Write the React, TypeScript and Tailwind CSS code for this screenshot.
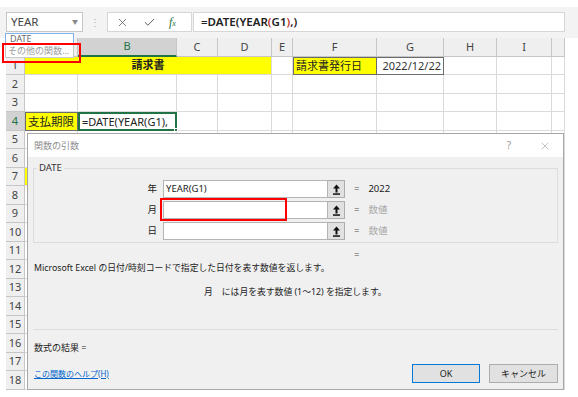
import { Check, X } from "lucide-react";

const cols = [
  { key: "A", w: "w-[53px]" },
  { key: "B", w: "w-[99px]" },
  { key: "C", w: "w-[41px]" },
  { key: "D", w: "w-[54px]" },
  { key: "E", w: "w-[21px]" },
  { key: "F", w: "w-[84px]" },
  { key: "G", w: "w-[67px]" },
  { key: "H", w: "w-[53px]" },
  { key: "I", w: "w-[55px]" },
  { key: "J", w: "w-[13px]" },
];

const rows = Array.from({ length: 18 }, (_, i) => i + 1);

function PickIcon() {
  return (
    <svg width="9" height="11" viewBox="0 0 9 11">
      <polygon points="4.5,0.5 8,4.5 1,4.5" fill="#111" />
      <rect x="3.5" y="4" width="2" height="4.5" fill="#111" />
      <rect x="1" y="9.3" width="7" height="1.5" fill="#111" />
    </svg>
  );
}

function Cell({ row, col, w }: { row: number; col: string; w: string }) {
  const grid = `${w} h-full shrink-0 border-r border-b border-[#dadada]`;
  if (row === 4 && col === "A")
    return <div className={`${w} h-full shrink-0 border border-[#6b6b6b] bg-[#ffff00] pl-[2px] text-[11.5px] leading-[17px]`}>支払期限</div>;
  if (row === 4 && col === "B")
    return (
      <div className={`${w} relative h-full shrink-0 border-2 border-[#217346] pl-[2px] text-[11px] leading-[15px]`}>
        =DATE(YEAR(G1),
        <span className="absolute -right-[3px] -bottom-[3px] h-[4px] w-[4px] border border-white bg-[#217346]" />
      </div>
    );
  if (row === 7 && col === "A") return <div className={`${grid} bg-[#ffff00]`} />;
  if (row === 1 && col === "F")
    return <div className={`${w} h-full shrink-0 border border-[#6b6b6b] bg-[#ffff00] pl-[2px] text-[11px] leading-[16px]`}>請求書発行日</div>;
  if (row === 1 && col === "G")
    return <div className={`${w} h-full shrink-0 border border-l-0 border-[#6b6b6b] pr-[2px] text-right text-[11px] leading-[16px] text-[#333]`}>2022/12/22</div>;
  return <div className={grid} />;
}

export default function App() {
  return (
    <div className="relative h-[397px] w-[578px] overflow-hidden bg-white font-['Noto_Sans','Noto_Sans_CJK_JP',sans-serif] text-[#222]">
      {/* formula bar */}
      <div className="mt-[7px] flex h-[31px] items-start bg-[#f3f3f3] pl-[6px] pt-[5px]">
        <div className="flex h-[20px] w-[77px] items-center justify-between border border-[#c6c6c6] bg-white pl-[4px] pr-[4px] text-[11.5px] text-[#444]">
          YEAR<span className="text-[6px] text-[#888]">▼</span>
        </div>
        <div className="flex h-[20px] w-[24px] items-center justify-center text-[10px] text-[#b0b0b0]">⋮</div>
        <div className="flex h-[20px] w-[85px] items-center border border-[#d6d6d6] bg-white">
          <X size={13} strokeWidth={1.4} className="ml-[8px] text-[#555]" />
          <Check size={13} strokeWidth={1.8} className="ml-[14px] text-[#555]" />
          <span className="ml-[13px] font-['Liberation_Serif',serif] text-[12px] italic text-[#217346]">
            f<span className="text-[8px]">x</span>
          </span>
        </div>
        <div className="ml-px flex h-[20px] w-[372px] items-center border border-[#d6d6d6] bg-white pl-[7px] text-[11.5px] font-semibold text-[#222]">
          =DATE(YEAR<span className="text-[#c0392b]">(</span>G1<span className="text-[#c0392b]">)</span>,)
        </div>
      </div>

      {/* column headers */}
      <div className="flex h-[19px] pl-[6px]">
        <div className="h-full w-[19px] shrink-0 border-r border-b border-[#c6c6c6] bg-[#efefef]" />
        {cols.map((c) => (
          <div
            key={c.key}
            className={`${c.w} flex h-full shrink-0 items-center justify-center text-[11px] ${
              c.key === "B"
                ? "border-r border-b-2 border-r-[#c6c6c6] border-b-[#217346] bg-[#d2d2d2] text-[#217346]"
                : "border-r border-b border-[#c6c6c6] bg-[#efefef] text-[#444]"
            }`}
          >
            {c.key === "J" || c.key === "A" ? "" : c.key}
          </div>
        ))}
      </div>

      {/* rows */}
      {rows.map((r) => (
        <div key={r} className={`flex pl-[6px] ${r % 2 === 1 ? "h-[18px]" : "h-[19px]"}`}>
          <div
            className={`flex h-full w-[19px] shrink-0 items-center justify-center border-r border-b border-[#c6c6c6] text-[11px] ${
              r === 4 ? "bg-[#d2d2d2] text-[#217346]" : "bg-[#efefef] text-[#444]"
            }`}
          >
            {r}
          </div>
          {r === 1 ? (
            <>
              <div className="flex h-full w-[247px] shrink-0 items-center justify-center border-r border-b border-[#dadada] bg-[#ffff00] text-[11px] font-bold">
                請求書
              </div>
              {cols.slice(4).map((c) => (
                <Cell key={c.key} row={r} col={c.key} w={c.w} />
              ))}
            </>
          ) : (
            cols.map((c) => <Cell key={c.key} row={r} col={c.key} w={c.w} />)
          )}
        </div>
      ))}

      {/* name box dropdown */}
      <div className="absolute left-[5px] top-[33px] w-[69px] bg-white text-[9px]">
        <div className="h-[11px] border border-[#7eb4ea] pl-[4px] leading-[9px] text-[#6a6a6a]">DATE</div>
        <div className="h-[14px] border border-t-0 border-[#c8c8c8] pl-[2px] leading-[13px] text-[#9a9a9a]">その他の関数...</div>
      </div>
      <div className="absolute left-[2px] top-[43px] h-[20px] w-[79px] border-2 border-[#ff0000]" />

      {/* function arguments dialog */}
      <div className="absolute left-[27px] top-[133px] flex h-[257px] w-[537px] flex-col border border-[#a8a8a8] bg-[#f0f0f0] text-[9px] text-[#222]">
        <div className="flex h-[23px] shrink-0 items-center bg-white pl-[6px]">
          <span className="text-[9px] text-[#8c8c8c]">関数の引数</span>
          <span className="ml-auto w-[12px] text-center text-[10px] text-[#999]">?</span>
          <X size={12} strokeWidth={1} className="ml-[24px] mr-[12px] text-[#888]" />
        </div>

        <fieldset className="mx-[5px] mt-[5px] h-[81px] border border-[#dcdcdc]">
          <legend className="ml-[3px] px-[2px] text-[9.5px] leading-[12px] text-[#333]">DATE</legend>
          <div className="mt-[6px] flex flex-col gap-[3px]">
            {[
              { label: "年", value: "YEAR(G1)", result: "2022" },
              { label: "月", value: "", result: "数値" },
              { label: "日", value: "", result: "数値" },
            ].map((a) => (
              <div key={a.label} className="flex h-[18px] items-center">
                <span className="w-[123px] text-right text-[9.5px]">{a.label}</span>
                <div className="ml-[6px] h-[18px] w-[165px] border border-[#b4b4b4] bg-white pl-[2px] text-[9.5px] leading-[16px]">{a.value}</div>
                <div className="flex h-[18px] w-[17px] items-center justify-center border border-l-0 border-[#adadad] bg-[#e1e1e1]">
                  <PickIcon />
                </div>
                <span className="ml-[9px] text-[9.5px] text-[#555]">=</span>
                <span className={`ml-[9px] text-[9.5px] ${a.result === "2022" ? "text-[#222]" : "text-[#a8a8a8]"}`}>{a.result}</span>
              </div>
            ))}
          </div>
        </fieldset>

        <div className="mt-[6px] h-[12px] pl-[326px] text-[9.5px] leading-[12px] text-[#555]">=</div>
        <div className="mt-[1px] h-[12px] pl-[6px] text-[8.8px] leading-[12px]">Microsoft Excel の日付/時刻コードで指定した日付を表す数値を返します。</div>
        <div className="mt-[12px] h-[12px] pl-[176px] text-[8.8px] leading-[12px]">
          月<span className="ml-[9px]">には月を表す数値 (1～12) を指定します。</span>
        </div>
        <div className="mx-[5px] mt-[31px] h-px bg-[#dcdcdc]" />
        <div className="mt-[12px] h-[12px] pl-[6px] leading-[12px]">数式の結果 =</div>
        <div className="mt-[10px] flex h-[19px] items-center pl-[6px] pr-[5px]">
          <a className="text-[8px] text-[#0066cc] underline">この関数のヘルプ(H)</a>
          <button type="button" className="ml-auto h-[19px] w-[68px] border border-[#0078d7] bg-[#e1e1e1] text-[9px]">OK</button>
          <button type="button" className="ml-[9px] h-[19px] w-[69px] border border-[#adadad] bg-[#e1e1e1] text-[9px]">キャンセル</button>
        </div>

        <div className="absolute left-[132px] top-[64px] h-[23px] w-[127px] border-2 border-[#ff0000]" />
      </div>
    </div>
  );
}
